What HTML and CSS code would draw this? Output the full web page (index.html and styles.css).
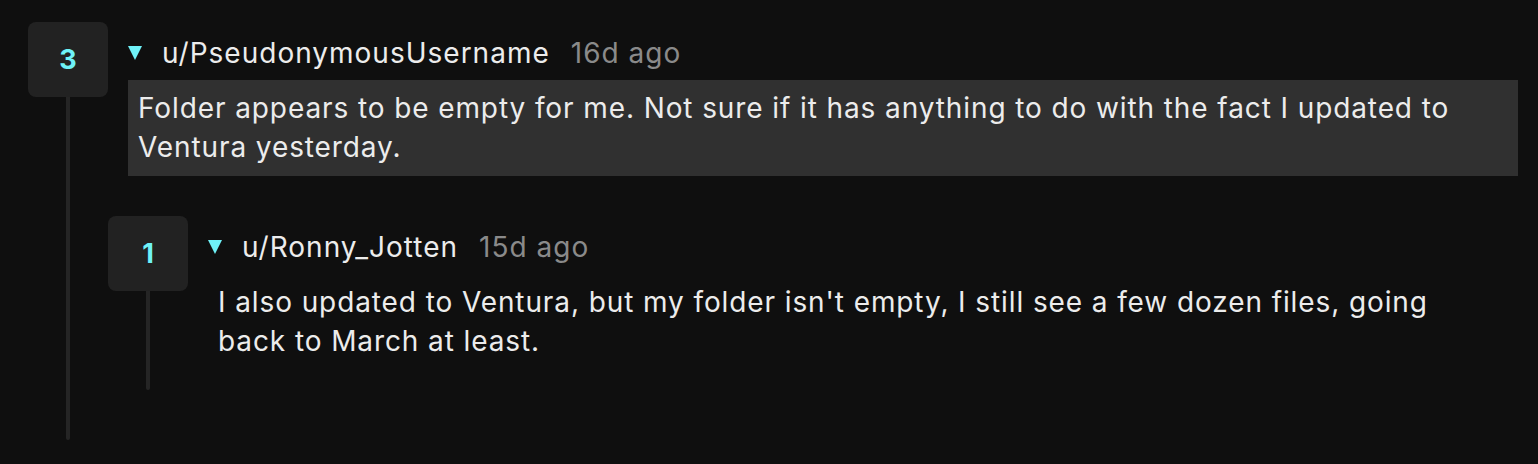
FILE: index.html
```html
<!DOCTYPE html>
<html lang="en">
<head>
<meta charset="utf-8">
<title>Comments</title>
<link rel="stylesheet" href="styles.css">
</head>
<body>
<div class="page">
  <div class="comment">
    <div class="rail">
      <div class="score">3</div>
      <div class="thread-line"></div>
    </div>
    <div class="main main-top">
      <div class="header">
        <span class="toggle"></span>
        <span class="author">u/PseudonymousUsername</span>
        <span class="time">16d ago</span>
      </div>
      <div class="body body-highlight">Folder appears to be empty for me. Not sure if it has anything to do with the fact I updated to Ventura yesterday.</div>
      <div class="children">
        <div class="comment">
          <div class="rail">
            <div class="score">1</div>
            <div class="thread-line"></div>
          </div>
          <div class="main main-child">
            <div class="header">
              <span class="toggle"></span>
              <span class="author">u/Ronny_Jotten</span>
              <span class="time">15d ago</span>
            </div>
            <div class="body">I also updated to Ventura, but my folder isn't empty, I still see a few dozen files, going back to March at least.</div>
          </div>
        </div>
      </div>
    </div>
  </div>
</div>
</body>
</html>
```

FILE: styles.css
```css
html, body {
  margin: 0;
  padding: 0;
  background: #0f0f0f;
}
body {
  font-family: Inter, "Noto Sans", "Liberation Sans", sans-serif;
  color: #e9e9e9;
}
.page {
  padding: 22px 20px 24px 28px;
}
.comment {
  display: flex;
  align-items: stretch;
}
.rail {
  width: 80px;
  flex: none;
  display: flex;
  flex-direction: column;
  align-items: center;
}
.score {
  width: 80px;
  height: 75px;
  border-radius: 8px;
  background: #222222;
  color: #6ff2f8;
  font-size: 27px;
  font-weight: 700;
  display: flex;
  align-items: center;
  justify-content: center;
}
.thread-line {
  flex: 1;
  width: 4px;
  background: #252525;
  border-radius: 0 0 2px 2px;
}
.main {
  flex: 1;
  min-width: 0;
}
.main-child {
  padding-bottom: 20px;
  padding-right: 48px;
}
.header {
  display: flex;
  align-items: flex-start;
  height: 58px;
  box-sizing: border-box;
  padding: 14px 0 10px 20px;
}
.toggle {
  width: 0;
  height: 0;
  margin-top: 10px;
  border-left: 7.5px solid transparent;
  border-right: 7.5px solid transparent;
  border-top: 14px solid #6ff2f8;
  margin-right: 20px;
}
.author,
.time {
  font-size: 28px;
  line-height: 34px;
  letter-spacing: 1px;
}
.author {
  color: #ececec;
}
.time {
  color: #8a8a8a;
  margin-left: 21px;
}
.body {
  margin-left: 20px;
  padding: 9px 10px 9px 10px;
  font-size: 28px;
  line-height: 39px;
  letter-spacing: 0.9px;
  color: #ececec;
}
.body-highlight {
  background: #303030;
}
.children {
  padding-top: 40px;
  padding-bottom: 50px;
}
```
